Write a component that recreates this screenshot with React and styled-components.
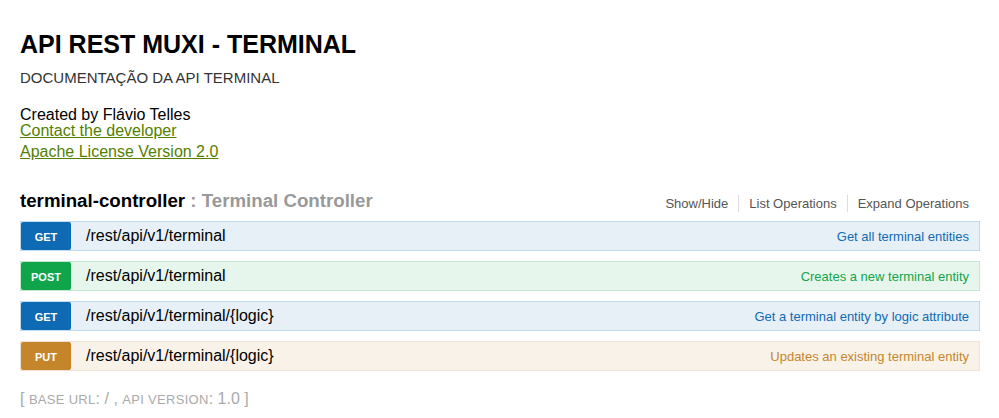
import styled, { createGlobalStyle } from "styled-components";

const GlobalStyle = createGlobalStyle`
  body {
    margin: 0;
    background: #fff;
    font-family: "Liberation Sans", Arial, sans-serif;
  }
`;

const methods = {
  get: { badge: "#0f6ab4", bg: "#e7f0f7", border: "#c3d9ec" },
  post: { badge: "#10a54a", bg: "#e7f6ec", border: "#c3e8d1" },
  put: { badge: "#c5862b", bg: "#f9f2e9", border: "#f0e2d7" },
};

const Page = styled.div`
  width: 960px;
  padding: 29px 0 0 20px;
`;

const Title = styled.h1`
  margin: 0;
  font-size: 25px;
  line-height: 30px;
  font-weight: bold;
  color: #000;
`;

const Subtitle = styled.div`
  margin-top: 10px;
  font-size: 15px;
  line-height: 18px;
  color: #333;
`;

const Info = styled.div`
  margin-top: 20px;
  display: flex;
  flex-direction: column;
  align-items: flex-start;
  font-size: 16px;
  line-height: 16px;
  color: #000;
`;

const InfoLink = styled.a`
  color: #547f00;
  text-decoration: underline;
  margin-top: ${(p) => p.$gap || 0}px;
`;

const Resource = styled.div`
  margin-top: 30px;
`;

const ResourceHeader = styled.div`
  display: flex;
  justify-content: space-between;
  align-items: flex-end;
`;

const ResourceTitle = styled.h2`
  margin: 0;
  font-size: 18.7px;
  line-height: 22px;
  font-weight: bold;
  color: #000;
`;

const ResourceDesc = styled.span`
  color: #999;
`;

const Options = styled.ul`
  display: flex;
  margin: 0;
  padding: 0 11px 0 0;
  list-style: none;
`;

const Option = styled.li`
  font-size: 13px;
  line-height: 17px;
  color: #555;
  padding: 0 10px;
  border-left: ${(p) => (p.$first ? "none" : "1px solid #ddd")};
  &:last-child {
    padding-right: 0;
  }
`;

const Operations = styled.div`
  margin-top: 9px;
  display: flex;
  flex-direction: column;
  gap: 10px;
`;

const Operation = styled.div`
  height: 30px;
  box-sizing: border-box;
  display: flex;
  align-items: center;
  background: ${(p) => methods[p.$method].bg};
  border: 1px solid ${(p) => methods[p.$method].border};
`;

const Badge = styled.span`
  width: 50px;
  height: 28px;
  display: flex;
  align-items: center;
  justify-content: center;
  border-radius: 2px;
  background: ${(p) => methods[p.$method].badge};
  color: #fff;
  font-size: 11px;
  font-weight: bold;
  text-transform: uppercase;
  padding-top: 1px;
  box-sizing: border-box;
`;

const Path = styled.span`
  padding-left: 15px;
  font-size: 16px;
  color: #000;
  flex: 1;
`;

const Summary = styled.span`
  padding-right: 10px;
  font-size: 13px;
  color: ${(p) => methods[p.$method].badge};
`;

const Footer = styled.h4`
  margin: 18px 0 0;
  font-size: 16px;
  line-height: 20px;
  font-weight: normal;
  color: #aaa;
`;

const FooterLabel = styled.span`
  font-size: 13px;
  letter-spacing: 0.3px;
  text-transform: uppercase;
`;

const ops = [
  { method: "get", path: "/rest/api/v1/terminal", summary: "Get all terminal entities" },
  { method: "post", path: "/rest/api/v1/terminal", summary: "Creates a new terminal entity" },
  { method: "get", path: "/rest/api/v1/terminal/{logic}", summary: "Get a terminal entity by logic attribute" },
  { method: "put", path: "/rest/api/v1/terminal/{logic}", summary: "Updates an existing terminal entity" },
];

export default function App() {
  return (
    <Page>
      <GlobalStyle />
      <Title>API REST MUXI - TERMINAL</Title>
      <Subtitle>DOCUMENTAÇÃO DA API TERMINAL</Subtitle>
      <Info>
        <span>Created by Flávio Telles</span>
        <InfoLink href="#">Contact the developer</InfoLink>
        <InfoLink href="#" $gap={5}>Apache License Version 2.0</InfoLink>
      </Info>
      <Resource>
        <ResourceHeader>
          <ResourceTitle>
            terminal-controller <ResourceDesc>: Terminal Controller</ResourceDesc>
          </ResourceTitle>
          <Options>
            <Option $first>Show/Hide</Option>
            <Option>List Operations</Option>
            <Option>Expand Operations</Option>
          </Options>
        </ResourceHeader>
        <Operations>
          {ops.map((op, i) => (
            <Operation key={i} $method={op.method}>
              <Badge $method={op.method}>{op.method}</Badge>
              <Path>{op.path}</Path>
              <Summary $method={op.method}>{op.summary}</Summary>
            </Operation>
          ))}
        </Operations>
      </Resource>
      <Footer>
        [ <FooterLabel>base url</FooterLabel>: / , <FooterLabel>api version</FooterLabel>: 1.0 ]
      </Footer>
    </Page>
  );
}
